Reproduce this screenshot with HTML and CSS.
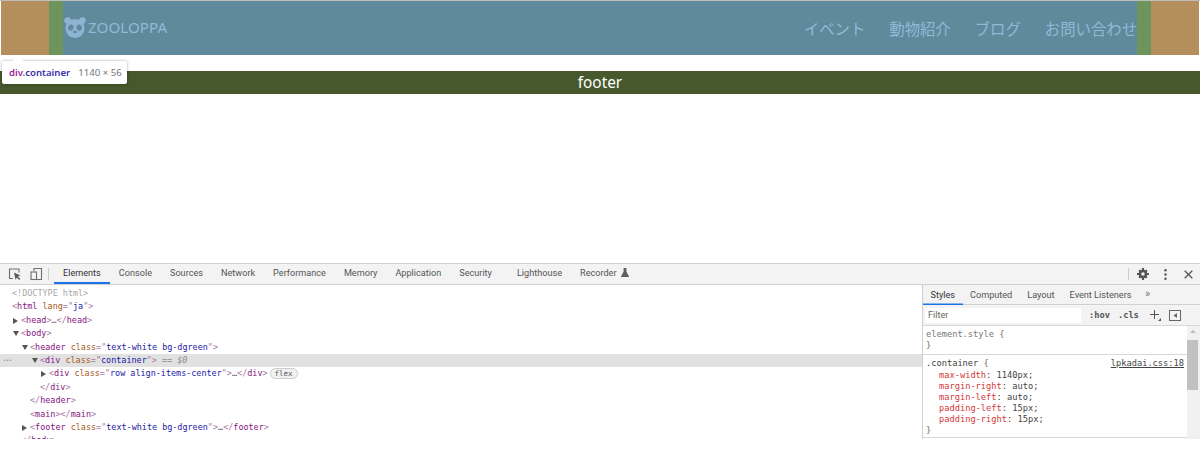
FILE: index.html
```html
<!DOCTYPE html>
<html lang="ja">
<head>
<meta charset="utf-8">
<title>ZOOLOPPA</title>
<link rel="stylesheet" href="styles.css">
</head>
<body>
<section class="page">
  <header class="hl-margin">
    <div class="hl-padding">
      <div class="hl-content">
        <a class="logo">
          <svg class="panda" width="22" height="21" viewBox="0 0 22 21">
            <circle cx="3.6" cy="3.6" r="3.3" fill="#8eb3d3"/>
            <circle cx="18.4" cy="3.6" r="3.3" fill="#8eb3d3"/>
            <circle cx="11" cy="11.5" r="9.5" fill="#8eb3d3"/>
            <ellipse cx="6.8" cy="10.6" rx="2.7" ry="3.1" fill="#64889f" transform="rotate(20 6.8 10.6)"/>
            <ellipse cx="15.2" cy="10.6" rx="2.7" ry="3.1" fill="#64889f" transform="rotate(-20 15.2 10.6)"/>
            <ellipse cx="11" cy="15" rx="1.8" ry="1.2" fill="#64889f"/>
          </svg>
          <span>ZOOLOPPA</span>
        </a>
        <nav class="nav">
          <a>イベント</a><a>動物紹介</a><a>ブログ</a><a>お問い合わせ</a>
        </nav>
      </div>
    </div>
  </header>
  <main class="main-gap"></main>
  <footer class="site-footer">footer</footer>
  <div class="tooltip">
    <span class="tt-tag">div</span><span class="tt-class">.container</span><span class="tt-size">1140 × 56</span>
  </div>
</section>

<section class="devtools">
  <div class="toolbar">
    <div class="tool-icons">
      <svg width="14" height="14" viewBox="0 0 14 14" fill="none" stroke="#6e6e6e" stroke-width="1.1">
        <path d="M5 11.5H1.5V2H11V5.5"/>
        <path d="M6 5.5l6.5 3-2.6 1 2.4 2.6-1.1 1-2.4-2.6-1.2 2.6z" fill="#5a5a5a" stroke="none"/>
      </svg>
      <svg width="13" height="14" viewBox="0 0 13 14" fill="none" stroke="#6e6e6e" stroke-width="1.1">
        <path d="M4 4V1.5h7.5v11H7"/>
        <rect x="1" y="5" width="5.5" height="7.5"/>
      </svg>
    </div>
    <div class="tabs">
      <span class="tab tab-active">Elements</span>
      <span class="tab">Console</span>
      <span class="tab">Sources</span>
      <span class="tab">Network</span>
      <span class="tab">Performance</span>
      <span class="tab">Memory</span>
      <span class="tab">Application</span>
      <span class="tab tab-wide">Security</span>
      <span class="tab">Lighthouse</span>
      <span class="tab tab-flask">Recorder
        <svg width="8" height="9" viewBox="0 0 8 9"><path d="M2.6 0h2.8v3.6L8 8.6V9H0v-.4l2.6-5z" fill="#5f5f5f"/></svg>
      </span>
    </div>
    <div class="tool-right">
      <span class="tool-divider"></span>
      <svg class="gear" width="12" height="12" viewBox="0 0 13 13"><circle cx="6.5" cy="6.5" r="4.7" fill="#555"/><path d="M5.3 0h2.4v13H5.3zM0 5.3h13v2.400H0zM1.500 3.200l1.700-1.700 8.300 8.300-1.700 1.700zM9.800 1.500l1.700 1.700-8.300 8.300-1.700-1.700z" fill="#555"/><circle cx="6.500" cy="6.500" r="1.900" fill="#f3f3f3"/></svg>
      <svg class="kebab" width="3" height="11" viewBox="0 0 3 11"><circle cx="1.500" cy="1.300" r="1.200" fill="#555"/><circle cx="1.500" cy="5.500" r="1.200" fill="#555"/><circle cx="1.500" cy="9.700" r="1.200" fill="#555"/></svg>
      <svg width="9" height="9" viewBox="0 0 9 9" stroke="#555" stroke-width="1.300"><path d="M.7.7l7.600 7.600M8.300.7L.7 8.300"/></svg>
    </div>
  </div>
  <div class="panes">
    <div class="dom">
      <div class="dom-row lv0 doctype">&lt;!DOCTYPE html&gt;</div>
      <div class="dom-row lv0"><i>&lt;</i><b>html</b> <u>lang</u><i>="</i><s>ja</s><i>"&gt;</i></div>
      <div class="dom-row lv1"><span class="arrow arrow-right"></span><i>&lt;</i><b>head</b><i>&gt;</i>…<i>&lt;/</i><b>head</b><i>&gt;</i></div>
      <div class="dom-row lv1"><span class="arrow arrow-down"></span><i>&lt;</i><b>body</b><i>&gt;</i></div>
      <div class="dom-row lv2"><span class="arrow arrow-down"></span><i>&lt;</i><b>header</b> <u>class</u><i>="</i><s>text-white bg-dgreen</s><i>"&gt;</i></div>
      <div class="dom-row lv3 selected"><span class="dots">•••</span><span class="arrow arrow-down"></span><i>&lt;</i><b>div</b> <u>class</u><i>="</i><s>container</s><i>"&gt;</i> <em>== $0</em></div>
      <div class="dom-row lv4"><span class="arrow arrow-right"></span><i>&lt;</i><b>div</b> <u>class</u><i>="</i><s>row align-items-center</s><i>"&gt;</i>…<i>&lt;/</i><b>div</b><i>&gt;</i><span class="badge">flex</span></div>
      <div class="dom-row lv3"><i>&lt;/</i><b>div</b><i>&gt;</i></div>
      <div class="dom-row lv2"><i>&lt;/</i><b>header</b><i>&gt;</i></div>
      <div class="dom-row lv2"><i>&lt;</i><b>main</b><i>&gt;&lt;/</i><b>main</b><i>&gt;</i></div>
      <div class="dom-row lv2"><span class="arrow arrow-right"></span><i>&lt;</i><b>footer</b> <u>class</u><i>="</i><s>text-white bg-dgreen</s><i>"&gt;</i>…<i>&lt;/</i><b>footer</b><i>&gt;</i></div>
      <div class="dom-row lv1"><i>&lt;/</i><b>body</b><i>&gt;</i></div>
    </div>
    <aside class="side">
      <div class="side-tabs">
        <span class="side-tab side-active">Styles</span>
        <span class="side-tab">Computed</span>
        <span class="side-tab">Layout</span>
        <span class="side-tab">Event Listeners</span>
        <span class="side-more">»</span>
      </div>
      <div class="filter-row">
        <span class="filter">Filter</span>
        <span class="hov">:hov</span>
        <span class="hov">.cls</span>
        <svg class="plus" width="11" height="11" viewBox="0 0 11 11"><path d="M4 0h1v4h4v1H5v4H4V5H0V4h4z" fill="#555"/><path d="M11 8v3H8z" fill="#555"/></svg>
        <svg class="toggle" width="12" height="11" viewBox="0 0 12 11" fill="none" stroke="#666"><rect x=".5" y=".5" width="11" height="10"/><path d="M8 3v5L4.500 5.500z" fill="#666" stroke="none"/></svg>
      </div>
      <div class="rules">
        <div class="rules-body">
          <div class="rule rule-first">
            <div class="code element-style">element.style <span class="brace">{</span></div>
            <div class="code"><span class="brace">}</span></div>
          </div>
          <div class="rule">
            <div class="code selector-line"><span>.container <span class="brace">{</span></span><span class="source">lpkadai.css:18</span></div>
            <div class="code decl"><span class="prop">max-width</span>: 1140px;</div>
            <div class="code decl"><span class="prop">margin-right</span>: auto;</div>
            <div class="code decl"><span class="prop">margin-left</span>: auto;</div>
            <div class="code decl"><span class="prop">padding-left</span>: 15px;</div>
            <div class="code decl"><span class="prop">padding-right</span>: 15px;</div>
            <div class="code"><span class="brace">}</span></div>
          </div>
        </div>
        <div class="scrollbar"><span class="scroll-up"></span><span class="thumb"></span></div>
      </div>
    </aside>
  </div>
</section>
</body>
</html>
```
FILE: styles.css
```css
* { box-sizing: border-box; }
html, body { margin: 0; padding: 0; background: #fff; }
body { width: 1200px; height: 460px; overflow: hidden; }

.page {
  position: relative;
  height: 263px;
  padding-top: 1px;
  background: #fff;
  box-shadow: inset 0 1px 0 #bdbdbd;
}
.hl-margin { margin: 0 1px; padding: 0 48px; background: #b58f5b; height: 54px; }
.hl-padding { height: 100%; padding: 0 14px; background: #6d945b; }
.hl-content {
  height: 100%;
  display: flex;
  align-items: center;
  justify-content: space-between;
  background: #5f8a9b;
  color: #93b8d8;
}
.logo { display: flex; align-items: center; gap: 2px; font: 15.2px/1 "Noto Sans", sans-serif; }
.panda { display: block; margin-left: 1px; margin-top: -1px; }
.nav { display: flex; gap: 24px; margin-top: 1px; font: 15.36px/1.5 "Noto Sans CJK JP", sans-serif; }
.main-gap { height: 16px; }
.site-footer {
  height: 23px;
  background: #46582c;
  color: #fff;
  text-align: center;
  font: 15.36px/23px "Noto Sans", sans-serif;
}
.tooltip {
  position: absolute;
  left: 2px;
  top: 61px;
  width: 125px;
  height: 23px;
  padding-left: 7px;
  background: #fff;
  border-radius: 2px;
  box-shadow: 0 0 3px rgba(0,0,0,.35);
  font: 600 9.6px/23px "Noto Sans", sans-serif;
  white-space: nowrap;
}
.tooltip::before {
  content: "";
  position: absolute;
  left: 10px;
  top: -5px;
  border: solid transparent;
  border-width: 0 6px 5px;
  border-bottom-color: #fff;
}
.tt-tag { color: #a01e9c; }
.tt-class { color: #3a2db0; }
.tt-size { margin-left: 8px; color: #757575; font-weight: 400; }

.devtools {
  height: 175px;
  border-top: 1px solid #cfcfcf;
  font-family: Roboto, sans-serif;
}
.toolbar {
  height: 21px;
  display: flex;
  align-items: stretch;
  background: #f3f3f3;
  border-bottom: 1px solid #d0d0d0;
}
.tool-icons {
  width: 50px;
  display: flex;
  align-items: center;
  gap: 8px;
  padding-left: 8px;
  margin-right: 4px;
  position: relative;
}
.tool-icons::after {
  content: "";
  position: absolute;
  right: 1px;
  top: 4px;
  bottom: 4px;
  width: 1px;
  background: #ccc;
}
.tabs { display: flex; flex: 1; }
.tab {
  padding: 0 9px;
  font-size: 9.15px;
  line-height: 19px;
  color: #555;
  white-space: nowrap;
}
.tab-active { color: #333; box-shadow: inset 0 -2px 0 #1a73e8; height: 20px; }
.tab-wide { margin-right: 7px; }
.tab-flask svg { margin-left: 2px; vertical-align: -1px; }
.tool-right { display: flex; align-items: center; padding-right: 7px; }
.tool-divider { width: 1px; height: 12px; margin-right: 8px; background: #ccc; }
.gear { margin-right: 14.5px; }
.kebab { margin-right: 17.5px; }

.panes { display: flex; height: 154px; background: #fff; }
.dom {
  width: 922px;
  height: 100%;
  padding-top: 2px;
  overflow: hidden;
  font: 8.45px/13.4px "DejaVu Sans Mono", monospace;
  color: #555;
}
.dom-row { position: relative; white-space: pre; height: 13.4px; }
.dom-row i { font-style: normal; color: #a8779f; }
.dom-row b { font-weight: 400; color: #881280; }
.dom-row u { text-decoration: none; color: #a85a20; }
.dom-row s { text-decoration: none; color: #1a1aa6; }
.dom-row em { color: #8c8c8c; }
.doctype { color: #a8a8a8; }
.lv0 { padding-left: 12px; }
.lv1 { padding-left: 21px; }
.lv2 { padding-left: 30px; }
.lv3 { padding-left: 40px; }
.lv4 { padding-left: 49px; }
.arrow {
  position: absolute;
  margin-left: -8px;
  margin-top: 4px;
  border: solid transparent;
}
.arrow-right { border-width: 3px 0 3px 5px; border-left-color: #555; }
.arrow-down { border-width: 5px 3px 0; border-top-color: #555; }
.selected { background: #e1e1e1; }
.dots { position: absolute; left: 3px; color: #888; font-size: 5px; }
.badge {
  display: inline-block;
  margin-left: 2px;
  height: 11px;
  padding: 0 4px;
  border: 1px solid #ccc;
  border-radius: 6px;
  background: #f2f2f2;
  color: #555;
  font-size: 7.5px;
  line-height: 9px;
}

.side { flex: 1; border-left: 1px solid #d0d0d0; height: 154px; display: flex; flex-direction: column; }
.side-tabs {
  height: 20px;
  display: flex;
  background: #f3f3f3;
  border-bottom: 1px solid #d0d0d0;
}
.side-tab { padding: 0 7.5px; font-size: 9.15px; line-height: 20px; color: #555; white-space: nowrap; }
.side-active { color: #333; box-shadow: inset 0 -1.5px 0 #1a73e8; height: 20px; }
.side-more { margin-left: 6px; font-size: 11px; line-height: 18px; color: #777; }
.filter-row {
  height: 21px;
  display: flex;
  align-items: center;
  background: #f3f3f3;
  border-bottom: 1px solid #d8d8d8;
  padding-left: 2px;
}
.filter {
  width: 156px;
  height: 15px;
  margin-right: 8px;
  padding-left: 3px;
  background: #fff;
  color: #666;
  font-size: 9.15px;
  line-height: 15px;
}
.hov { margin-right: 8px; font: 700 8.7px/1 "DejaVu Sans Mono", monospace; color: #555; }
.plus { margin: 0 8px 0 3px; }
.rules { flex: 1; display: flex; min-height: 0; }
.rules-body { flex: 1; min-width: 0; }
.rule { border-bottom: 1px solid #d8d8d8; padding: 3px 3px 1px; }
.rule-first { padding: 3px 3px 3px; }
.code {
  font: 8.7px/11px "DejaVu Sans Mono", monospace;
  color: #444;
  white-space: pre;
}
.element-style { color: #777; }
.brace { color: #8a6a50; }
.selector-line { display: flex; justify-content: space-between; margin-bottom: 1px; }
.source { color: #444; text-decoration: underline; }
.decl { padding-left: 13px; }
.prop { color: #c80000; opacity: .8; }
.scrollbar {
  width: 13px;
  background: #f1f1f1;
  position: relative;
  padding-top: 14px;
}
.scroll-up {
  position: absolute;
  left: 3px;
  top: 4px;
  border: solid transparent;
  border-width: 0 3px 3px;
  border-bottom-color: #bdbdbd;
}
.thumb { display: block; width: 11px; height: 50px; background: #c1c1c1; }
```
